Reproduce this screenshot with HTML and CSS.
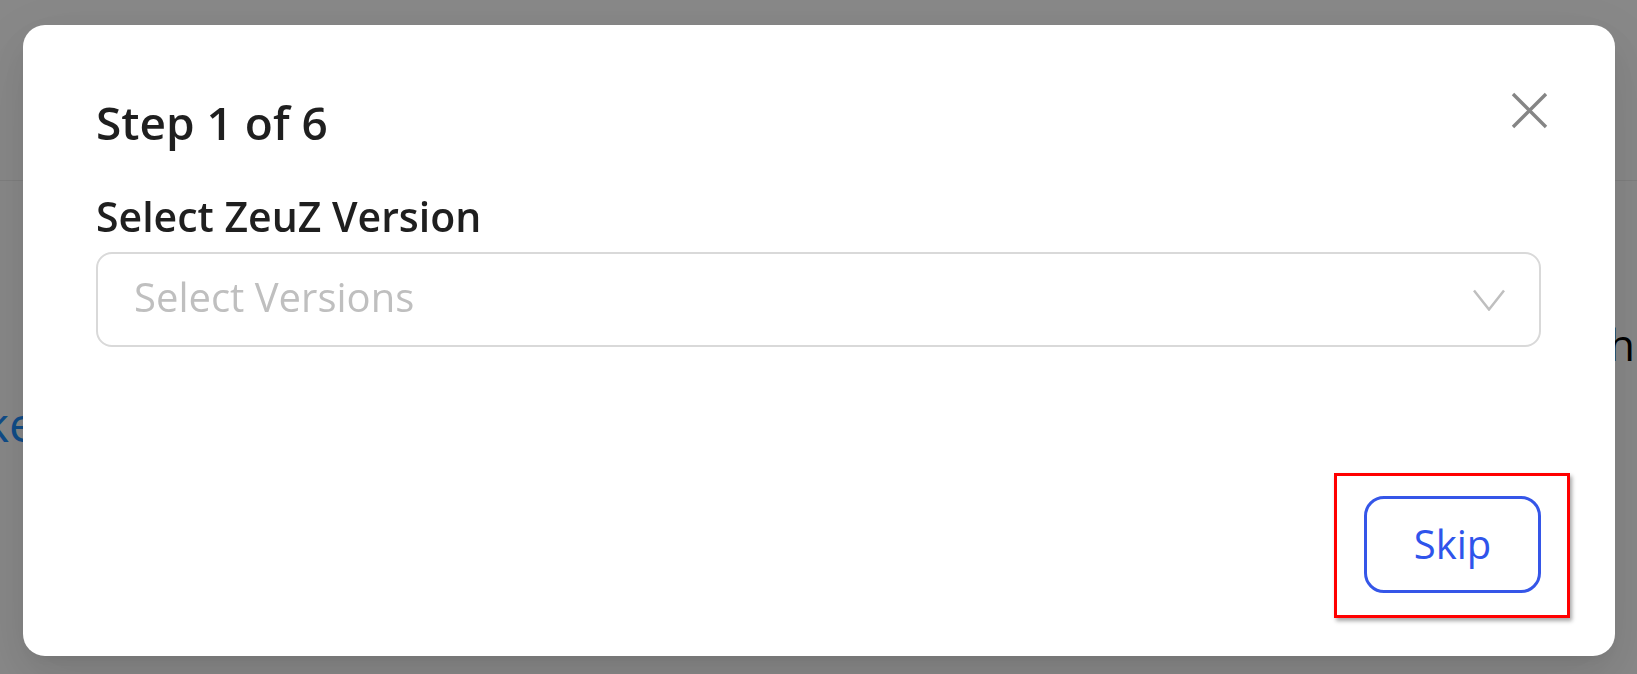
FILE: index.html
```html
<!DOCTYPE html>
<html lang="en">
<head>
<meta charset="utf-8">
<title>Step 1 of 6</title>
<link rel="stylesheet" href="styles.css">
</head>
<body>
<div class="page">
  <header class="page-header"></header>
  <main class="page-main">
    <p class="page-text">Search with</p>
    <a class="page-link" href="#">Make</a>
  </main>
</div>

<div class="overlay">
  <div class="modal" role="dialog">
    <button class="modal-close" aria-label="Close">
      <svg width="37" height="37" viewBox="0 0 37 37"><path d="M2 2L35 35M35 2L2 35" stroke="#858585" stroke-width="3.4" fill="none"/></svg>
    </button>
    <h2 class="modal-title">Step 1 of 6</h2>
    <label class="field-label">Select ZeuZ Version</label>
    <div class="select">
      <span class="select-placeholder">Select Versions</span>
      <svg class="select-arrow" width="32" height="22" viewBox="0 0 32 22"><path d="M1 1.5L16 20.5L31 1.5" stroke="#bfbfbf" stroke-width="2.5" fill="none"/></svg>
    </div>
    <div class="modal-footer">
      <span class="highlight"><button class="btn-skip">Skip</button></span>
    </div>
  </div>
</div>
</body>
</html>
```

FILE: styles.css
```css
html, body {
  margin: 0;
  padding: 0;
}

body {
  width: 1637px;
  height: 674px;
  overflow: hidden;
  background: #ffffff;
  font-family: "Open Sans", "Noto Sans", sans-serif;
}

.page {
  display: flex;
  flex-direction: column;
  height: 674px;
}

.page-header {
  height: 180px;
  border-bottom: 1px solid #eeeeee;
  flex: none;
}

.page-main {
  display: flex;
  flex-direction: column;
  padding-right: 2px;
}

.page-text {
  margin: 133px 0 0 0;
  font-size: 44px;
  line-height: 60px;
  color: #000;
  text-align: right;
}

.page-link {
  margin: 18px 0 0 -86px;
  font-size: 48px;
  line-height: 64px;
  color: #1d8fff;
  text-decoration: none;
}

.overlay {
  position: fixed;
  inset: 0;
  background: rgba(0, 0, 0, 0.467);
  display: flex;
  padding: 25px 22px 18px 23px;
}

.modal {
  position: relative;
  flex: 1;
  display: flex;
  flex-direction: column;
  background: #ffffff;
  border-radius: 22px;
  padding: 67px 74px 63px 73px;
  box-shadow: 0 16px 42px 0 rgba(0, 0, 0, 0.08), 0 8px 16px -10px rgba(0, 0, 0, 0.12), 0 24px 72px 20px rgba(0, 0, 0, 0.05);
}

.modal-close {
  position: absolute;
  top: 67px;
  right: 67px;
  width: 37px;
  height: 37px;
  padding: 0;
  border: 0;
  background: transparent;
  display: flex;
}

.modal-title {
  margin: 0;
  font-size: 46px;
  line-height: 60px;
  font-weight: 600;
  color: #1f1f1f;
}

.field-label {
  margin-top: 37px;
  font-size: 41px;
  line-height: 54px;
  font-weight: 600;
  color: #1f1f1f;
}

.select {
  margin-top: 9px;
  height: 95px;
  box-sizing: border-box;
  border: 2px solid #d9d9d9;
  border-radius: 16px;
  display: flex;
  align-items: center;
  justify-content: space-between;
  padding: 0 34px 0 36px;
}

.select-placeholder {
  font-size: 40px;
  line-height: 54px;
  color: #bfbfbf;
  margin-bottom: 6px;
}

.select-arrow {
  display: block;
}

.modal-footer {
  margin-top: auto;
  display: flex;
  justify-content: flex-end;
}

.highlight {
  position: relative;
  display: flex;
}

.highlight::after {
  content: "";
  position: absolute;
  top: -23px;
  left: -30px;
  right: -29px;
  bottom: -25px;
  border: 3px solid #ff0000;
  box-shadow: 2px 3px 4px rgba(0, 0, 0, 0.35);
  pointer-events: none;
}

.btn-skip {
  width: 177px;
  height: 97px;
  box-sizing: border-box;
  border: 3px solid #3556e8;
  border-radius: 20px;
  background: #ffffff;
  color: #2f54eb;
  font-family: "Open Sans", "Noto Sans", sans-serif;
  font-size: 40px;
  line-height: 54px;
  padding: 0 0 2px 0;
  display: flex;
  align-items: center;
  justify-content: center;
}
```
